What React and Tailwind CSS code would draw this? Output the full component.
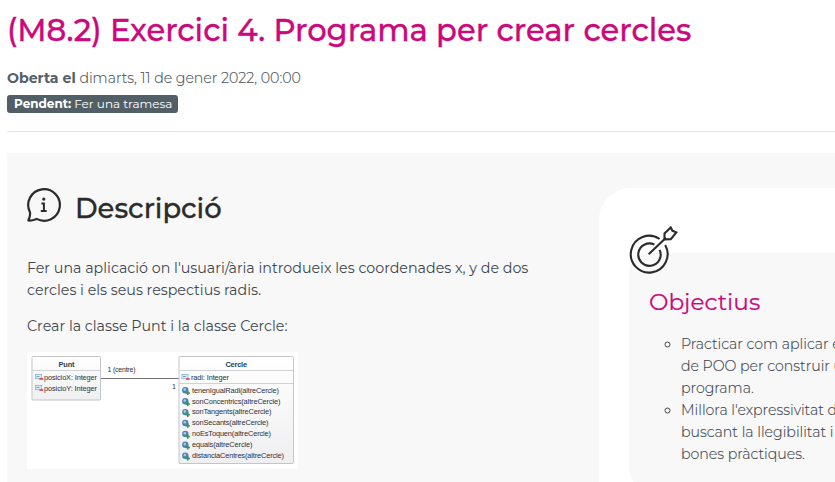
const METHODS = [
  ['tenenIgualRadi(altreCercle)', 87],
  ['sonConcentrics(altreCercle)', 88.5],
  ['sonTangents(altreCercle)', 79.5],
  ['sonSecants(altreCercle)', 76.5],
  ['noEsToquen(altreCercle)', 79],
  ['equals(altreCercle)', 60.5],
  ['distanciaCentres(altreCercle)', 92],
];

function FieldIcon({ x, y }) {
  return (
    <g transform={`translate(${x} ${y})`}>
      <rect x="0.4" y="0.5" width="6.2" height="4.2" fill="#d8ecf8" stroke="#86b3d2" strokeWidth="0.8" />
      <path d="M1.5 2.5h3" stroke="#5b93bd" strokeWidth="0.8" />
      <rect x="4.4" y="4" width="3.8" height="1.9" fill="#d2566a" />
    </g>
  );
}

function MethodIcon({ x, y }) {
  return (
    <g transform={`translate(${x} ${y})`}>
      <circle cx="3.3" cy="3.3" r="3.2" fill="#5083ad" />
      <circle cx="2.8" cy="2.6" r="1.3" fill="#a9cbe2" />
      <path d="M5.8 3.9v4.2M3.7 6h4.2" stroke="#2f9553" strokeWidth="1.5" />
    </g>
  );
}

function ClassDiagram() {
  return (
    <svg className="block bg-white" width="271" height="117" viewBox="0 0 271 117" fontFamily='"Liberation Sans", Arial, sans-serif' fontSize="7.4" fill="#2d2f38">
      <defs>
        <linearGradient id="box" x1="0" y1="0" x2="0" y2="1">
          <stop offset="0" stopColor="#ffffff" />
          <stop offset="1" stopColor="#efeff1" />
        </linearGradient>
      </defs>
      <path d="M73 26.5h79" stroke="#76717a" strokeWidth="1" />
      <rect x="5" y="4.5" width="68.5" height="43.5" rx="1" fill="url(#box)" stroke="#c3c5c9" />
      <path d="M5 18.5h68" stroke="#d0d2d6" />
      <text x="31.5" y="15" fontWeight="700" fill="#17405f" textLength="16">Punt</text>
      <FieldIcon x={8} y={22} />
      <text x="17" y="27.7" textLength="53">posicioX: Integer</text>
      <FieldIcon x={8} y={33} />
      <text x="17" y="38.5" textLength="53">posicioY: Integer</text>
      <text x="80.5" y="19.5" fontSize="7" textLength="28">1 (centre)</text>
      <text x="145" y="37" fontSize="7">1</text>
      <rect x="152" y="4.5" width="114.5" height="107" rx="1" fill="url(#box)" stroke="#c3c5c9" />
      <path d="M152 18.5h114M152 31.5h114" stroke="#d0d2d6" />
      <text x="198.5" y="15" fontWeight="700" fill="#17405f" textLength="21.5">Cercle</text>
      <FieldIcon x={154.5} y={22} />
      <text x="164" y="27.7" textLength="38">radi: Integer</text>
      {METHODS.map(([name, width], i) => (
        <g key={name}>
          <MethodIcon x={155} y={35 + i * 10.9} />
          <text x="165" y={40.6 + i * 10.9} textLength={width}>{name}</text>
        </g>
      ))}
    </svg>
  );
}

function InfoBubble() {
  return (
    <svg className="block shrink-0" width="36" height="36" viewBox="0 0 36 36" fill="none" stroke="#2b2b2b" strokeWidth="2.2" strokeLinejoin="round">
      <path d="M2.9 25A15.8 15.8 0 1 1 9.6 31.9C6.6 33.1 4 34.1 1.3 33.5C2.6 31.1 3.6 28.5 2.9 25Z" />
      <circle cx="16.8" cy="12.1" r="1.6" fill="#2b2b2b" stroke="none" />
      <path d="M14.4 16.4h2.5v7M13.8 24h5.9" strokeWidth="2" strokeLinejoin="miter" />
    </svg>
  );
}

function Target() {
  return (
    <svg className="block" width="50" height="50" viewBox="0 0 50 50" fill="none" stroke="#2b2b2b" strokeWidth="2.1">
      <path d="M30.6 14A18.4 18.4 0 1 0 36.2 20.1" />
      <path d="M25.4 19.6A11.2 11.2 0 1 0 30.6 24.9" />
      <path d="M19.7 29.3L37 12.8" />
      <path d="M35.5 14.4V8.4L41.7 2.5L43.5 5.8L47.3 7.4L41.8 14.1Z" />
    </svg>
  );
}

export default function App() {
  return (
    <div className="h-[482px] w-[835px] overflow-hidden bg-white pl-[7px] font-['Montserrat',Inter,sans-serif] text-[14.25px] leading-[22px] text-[#3f474e]">
      <header className="h-[132px] border-b border-[#e5e5e5] pt-[10px] whitespace-nowrap">
        <h1 className="text-[30.6px] leading-[40px] font-medium text-[#cb087c] [-webkit-text-stroke:0.3px]">(M8.2) Exercici 4. Programa per crear cercles</h1>
        <p className="mt-[17px] text-[14.15px] font-light text-[#49565d]">
          <strong className="font-bold text-[#546067]">Oberta el</strong> <span className="[-webkit-text-stroke:0.15px]">dimarts, 11 de gener 2022, 00:00</span>
        </p>
        <div className="mt-[6px] flex h-[18px] w-[171px] items-center rounded-[3px] bg-[#525f67] pl-[7px] text-[12px] leading-[18px] text-white">
          <span><strong className="font-bold">Pendent:</strong> Fer una tramesa</span>
        </div>
      </header>
      <main className="mt-[21px] flex h-[329px] w-[1000px] items-start bg-[#f8f8f8] whitespace-nowrap">
        <section className="w-[592px] shrink-0 pt-[34px] pl-5">
          <div className="flex items-start gap-[12px]">
            <InfoBubble />
            <h2 className="pt-[2px] text-[27.4px] leading-[38px] font-medium text-[#2b2b2b] [-webkit-text-stroke:0.3px]">Descripció</h2>
          </div>
          <p className="mt-[30px]">
            Fer una aplicació on l'usuari/ària introdueix les coordenades x, y de dos
            <br />
            cercles i els seus respectius radis.
          </p>
          <p className="mt-[14px] mb-[15px]">Crear la classe Punt i la classe Cercle:</p>
          <ClassDiagram />
        </section>
        <aside className="mt-[35px] h-[400px] grow rounded-tl-[32px] bg-white pt-[37px] pl-[30px]">
          <div className="relative z-10 h-[28px]"><Target /></div>
          <div className="h-[236px] rounded-[20px] bg-[#f8f8f8] pt-[33px] pl-5">
            <h3 className="text-[23.2px] leading-[32px] text-[#cb087c] [-webkit-text-stroke:0.2px]">Objectius</h3>
            <ul className="mt-[15px] list-[circle] pl-[32px] text-[14.15px] font-light [-webkit-text-stroke:0.15px]">
              <li>
                Practicar com aplicar els
                <br />
                de POO per construir un
                <br />
                programa.
              </li>
              <li>
                Millora l'expressivitat del
                <br />
                buscant la llegibilitat i
                <br />
                bones pràctiques.
              </li>
            </ul>
          </div>
        </aside>
      </main>
    </div>
  );
}
